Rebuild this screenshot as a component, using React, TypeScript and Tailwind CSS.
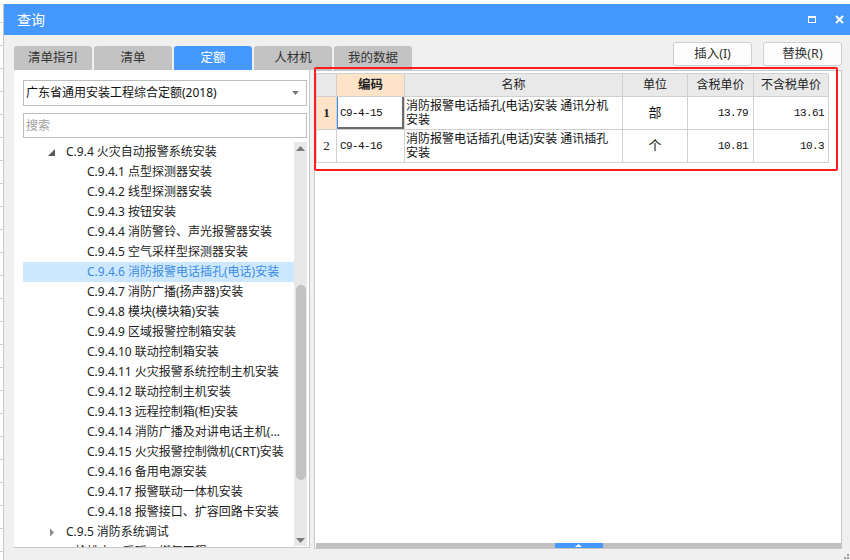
import React from "react";

const tabs = ["清单指引", "清单", "定额", "人材机", "我的数据"];

type TreeItem = { text: string; level: 0 | 1 | 2; arrow?: "open" | "closed"; selected?: boolean };

const tree: TreeItem[] = [
  { text: "C.9.4 火灾自动报警系统安装", level: 1, arrow: "open" },
  { text: "C.9.4.1 点型探测器安装", level: 2 },
  { text: "C.9.4.2 线型探测器安装", level: 2 },
  { text: "C.9.4.3 按钮安装", level: 2 },
  { text: "C.9.4.4 消防警铃、声光报警器安装", level: 2 },
  { text: "C.9.4.5 空气采样型探测器安装", level: 2 },
  { text: "C.9.4.6 消防报警电话插孔(电话)安装", level: 2, selected: true },
  { text: "C.9.4.7 消防广播(扬声器)安装", level: 2 },
  { text: "C.9.4.8 模块(模块箱)安装", level: 2 },
  { text: "C.9.4.9 区域报警控制箱安装", level: 2 },
  { text: "C.9.4.10 联动控制箱安装", level: 2 },
  { text: "C.9.4.11 火灾报警系统控制主机安装", level: 2 },
  { text: "C.9.4.12 联动控制主机安装", level: 2 },
  { text: "C.9.4.13 远程控制箱(柜)安装", level: 2 },
  { text: "C.9.4.14 消防广播及对讲电话主机(...", level: 2 },
  { text: "C.9.4.15 火灾报警控制微机(CRT)安装", level: 2 },
  { text: "C.9.4.16 备用电源安装", level: 2 },
  { text: "C.9.4.17 报警联动一体机安装", level: 2 },
  { text: "C.9.4.18 报警接口、扩容回路卡安装", level: 2 },
  { text: "C.9.5 消防系统调试", level: 1, arrow: "closed" },
  { text: "C.10 给排水、采暖、燃气工程", level: 0 },
];

const rows = [
  { no: "1", code: "C9-4-15", name: ["消防报警电话插孔(电话)安装 通讯分机", "安装"], unit: "部", tax: "13.79", noTax: "13.61", active: true },
  { no: "2", code: "C9-4-16", name: ["消防报警电话插孔(电话)安装 通讯插孔", "安装"], unit: "个", tax: "10.81", noTax: "10.3", active: false },
];

const cjk = "font-['Noto_Sans','Noto_Sans_CJK_SC',sans-serif]";
const mono = "font-['Liberation_Mono','Noto_Sans_CJK_SC',monospace] text-[11px] tracking-[-0.6px]";
const cell = "border-r border-b border-[#d0d0d0]";
const head = `h-[23px] bg-[#e9e9e9] ${cell} flex items-center justify-center text-[12px] text-[#222]`;

function TreeArrow({ kind }: { kind: "open" | "closed" }) {
  if (kind === "open") {
    return (
      <svg width="7" height="7" viewBox="0 0 7 7">
        <path d="M7 0 L7 7 L0 7 Z" fill="#5a5a5a" />
      </svg>
    );
  }
  return (
    <svg width="6" height="9" viewBox="0 0 6 9">
      <path d="M1 0.5 L5 4.5 L1 8.5 Z" fill="#8a8a8a" />
    </svg>
  );
}

export default function App() {
  return (
    <div className={`w-[850px] h-[560px] overflow-hidden bg-white bg-[repeating-linear-gradient(to_bottom,#ffffff_0px,#ffffff_22px,#cfcfcf_22px,#cfcfcf_23px)] ${cjk}`}>
      <div className="ml-[3px] mt-[4px] w-[847px] h-[556px] flex flex-col bg-[#f0f0f0] border-l border-[#c8c8c8]">
        {/* title bar */}
        <div className="h-[31px] shrink-0 bg-[#4599fe] flex items-center pl-[13px] pr-[6px] text-white">
          <span className="text-[14px] leading-none">查询</span>
          <div className="ml-auto flex items-center gap-[19px]">
            <div className="w-[8px] h-[7px] border border-white border-t-2" />
            <svg width="9" height="9" viewBox="0 0 9 9">
              <path d="M1 1 L8 8 M8 1 L1 8" stroke="#fff" strokeWidth="2" />
            </svg>
          </div>
        </div>

        {/* tabs + buttons */}
        <div className="h-[24px] mt-[11px] shrink-0 flex items-start pl-[10px] pr-[8px]">
          <div className="flex gap-[2px]">
            {tabs.map((t, i) => (
              <div
                key={t}
                className={`w-[78px] h-[24px] rounded-t-[3px] flex items-center justify-center text-[12.5px] ${
                  i === 2 ? "bg-[#4599fe] text-white" : "bg-[#c3c3c3] text-[#333]"
                }`}
              >
                {t}
              </div>
            ))}
          </div>
          <div className="ml-auto -mt-[4px] flex gap-[11px]">
            {["插入(I)", "替换(R)"].map((b) => (
              <div
                key={b}
                className="w-[79px] h-[24px] bg-[#fdfdfd] border border-[#cfcfcf] rounded-[3px] flex items-center justify-center text-[12.5px] text-[#333]"
              >
                {b}
              </div>
            ))}
          </div>
        </div>

        {/* panels */}
        <div className="h-[478px] shrink-0 flex gap-[4px] pl-[10px] pr-[8px]">
          {/* left panel */}
          <div className="w-[296px] h-full bg-white border-r border-b border-[#c8c8c8] flex flex-col pl-[9px] pr-[2px] pt-[10px]">
            <div className="w-[284px] h-[26px] border border-[#bdbdbd] flex items-center pl-[2px] pr-[7px] text-[12px] text-[#111]">
              <span>广东省通用安装工程综合定额(2018)</span>
              <svg className="ml-auto" width="7" height="4" viewBox="0 0 7 4">
                <path d="M0 0 L7 0 L3.5 4 Z" fill="#7a7a7a" />
              </svg>
            </div>
            <div className="w-[284px] h-[25px] mt-[7px] border border-[#bdbdbd] flex items-center pl-[2px] text-[12px] text-[#a0a0a0]">
              搜索
            </div>
            <div className="mt-[4px] flex flex-1 min-h-0">
              <div className="w-[271px] overflow-hidden">
                {tree.map((it) => (
                  <div
                    key={it.text}
                    className={`h-[20px] flex items-center text-[12px] leading-[20px] whitespace-nowrap ${
                      it.selected ? "bg-[#cce8ff] text-[#3d8be2]" : "text-[#222]"
                    }`}
                  >
                    {it.level === 0 && <span className="pl-[24px]">{it.text}</span>}
                    {it.level === 1 && (
                      <>
                        <span className="w-[43px] flex justify-end pr-[11px]">
                          {it.arrow && <TreeArrow kind={it.arrow} />}
                        </span>
                        <span>{it.text}</span>
                      </>
                    )}
                    {it.level === 2 && <span className="pl-[64px]">{it.text}</span>}
                  </div>
                ))}
              </div>
              {/* vertical scrollbar */}
              <div className="w-[13px] h-[404px] bg-[#e8e8e8] flex flex-col items-center">
                <svg className="mt-[4px]" width="9" height="5" viewBox="0 0 9 5">
                  <path d="M4.5 0 L9 5 L0 5 Z" fill="#7a7a7a" />
                </svg>
                <div className="mt-[134px] w-[10px] h-[195px] rounded-[5px] bg-[#c2c2c2]" />
                <svg className="mt-auto mb-[3px]" width="9" height="5" viewBox="0 0 9 5">
                  <path d="M0 0 L9 0 L4.5 5 Z" fill="#7a7a7a" />
                </svg>
              </div>
            </div>
          </div>

          {/* right panel */}
          <div className="relative w-[529px] h-[479px] bg-white border border-[#c8c8c8] flex flex-col pl-[1px] pt-[2px]">
            <div className="grid grid-cols-[20px_68px_218px_65px_66px_75px] w-[512px] border-l border-t border-[#d0d0d0]">
              <div className={`h-[23px] bg-[#e9e9e9] ${cell}`} />
              <div className={`h-[23px] bg-[#fde4c8] ${cell} flex items-center justify-center text-[12.5px] font-bold text-[#222]`}>编码</div>
              <div className={head}>名称</div>
              <div className={head}>单位</div>
              <div className={head}>含税单价</div>
              <div className={head}>不含税单价</div>
              {rows.map((r) => (
                <React.Fragment key={r.no}>
                  <div
                    className={`h-[33px] ${cell} flex items-center justify-center text-[13px] font-['Liberation_Serif',serif] text-[#222] ${
                      r.active ? "bg-[#fde4c8] font-bold" : "bg-white"
                    }`}
                  >
                    {r.no}
                  </div>
                  <div
                    className={`h-[33px] ${cell} flex items-center pl-[3px] text-[#111] ${mono} ${
                      r.active ? "shadow-[inset_1px_0_0_#3d8fe6,inset_-2px_-2px_0_#6b6b6b]" : ""
                    }`}
                  >
                    {r.code}
                  </div>
                  <div className={`h-[33px] ${cell} flex flex-col justify-center pl-[1px] text-[12px] leading-[14px] text-[#111] whitespace-nowrap`}>
                    {r.name.map((l) => (
                      <span key={l}>{l}</span>
                    ))}
                  </div>
                  <div className={`h-[33px] ${cell} flex items-center justify-center text-[13px] text-[#111]`}>
                    {r.unit}
                  </div>
                  <div className={`h-[33px] ${cell} flex items-center justify-end pr-[5px] text-[#111] ${mono}`}>
                    {r.tax}
                  </div>
                  <div className={`h-[33px] ${cell} flex items-center justify-end pr-[4px] text-[#111] ${mono}`}>
                    {r.noTax}
                  </div>
                </React.Fragment>
              ))}
            </div>

            {/* horizontal scrollbar */}
            <div className="mt-auto h-[5px] bg-[#c0c0c0] flex justify-center">
              <div className="w-[48px] h-[5px] bg-[#4599fe] flex items-center justify-center">
                <svg width="7" height="3" viewBox="0 0 7 3">
                  <path d="M3.5 0 L7 3 L0 3 Z" fill="#fff" />
                </svg>
              </div>
            </div>

            {/* red highlight annotation */}
            <div className="absolute -left-[1px] -top-[4px] w-[524px] h-[104px] border-2 border-[#fe1d1d] rounded-[2px] pointer-events-none" />
          </div>
        </div>

        {/* resize grip */}
        <div className="mt-auto ml-auto mr-[1px] mb-[1px] grid grid-cols-3 gap-[1px] w-[8px]">
          <span />
          <span />
          <span className="w-[2px] h-[2px] bg-[#a0a0a0]" />
          <span />
          <span className="w-[2px] h-[2px] bg-[#a0a0a0]" />
          <span className="w-[2px] h-[2px] bg-[#a0a0a0]" />
        </div>
      </div>
    </div>
  );
}
